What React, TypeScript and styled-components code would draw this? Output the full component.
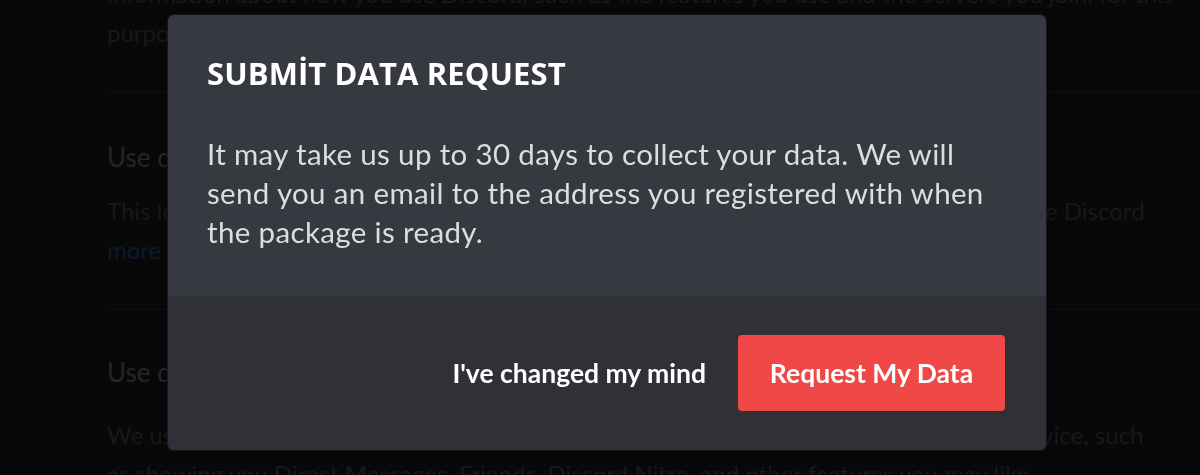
import React from 'react';
import styled, { createGlobalStyle } from 'styled-components';

const GlobalStyle = createGlobalStyle`
    html, body {
        margin: 0;
        padding: 0;
        background: #080809;
        overflow: hidden;
    }
    body {
        font-family: Lato, "Open Sans", sans-serif;
    }
`;

const Page = styled.div`
    width: 1200px;
    height: 475px;
    overflow: hidden;
    padding: 0 0 0 107px;
    box-sizing: border-box;
    background: #080809;
    font-family: Lato, sans-serif;
`;

const Paragraph = styled.p`
    margin: 0;
    font-size: 24px;
    line-height: 39px;
    color: #17181a;
    white-space: nowrap;
`;

const Heading = styled.h3`
    margin: 0;
    font-size: 26px;
    font-weight: 400;
    line-height: 32px;
    color: #242528;
    white-space: nowrap;
`;

const Divider = styled.hr`
    margin: 0;
    border: 0;
    border-top: 1px solid #0f1012;
    width: 1100px;
`;

const Section = styled.section<{ $top: number }>`
    padding-top: ${(p) => p.$top}px;
`;

const Link = styled.span`
    color: #0b1a2e;
`;

const Overlay = styled.div`
    position: fixed;
    inset: 0;
    display: flex;
    align-items: flex-start;
    padding: 15px 0 0 168px;
    box-sizing: border-box;
`;

const Modal = styled.div`
    width: 878px;
    height: 435px;
    border-radius: 6px;
    overflow: hidden;
    display: flex;
    flex-direction: column;
    background: #36393f;
    box-shadow: 0 0 0 1px rgba(32, 34, 37, 0.6), 0 2px 10px 0 rgba(0, 0, 0, 0.2);
`;

const Body = styled.div`
    padding: 40px 46px 0 39px;
    flex: 1;
`;

const Title = styled.h2`
    margin: 0 0 43px;
    font-family: "Open Sans", sans-serif;
    font-weight: 700;
    font-size: 31px;
    line-height: 36px;
    text-transform: uppercase;
    color: #ffffff;
    letter-spacing: 0.1px;
`;

const Message = styled.p`
    margin: 0;
    font-family: Lato, sans-serif;
    font-size: 29.5px;
    line-height: 39px;
    letter-spacing: 0.35px;
    color: #dcddde;
`;

const Footer = styled.div`
    height: 154px;
    flex-shrink: 0;
    box-sizing: border-box;
    background: #2f3136;
    display: flex;
    align-items: center;
    justify-content: flex-end;
    gap: 32px;
    padding: 0 41px;
`;

const LinkButton = styled.button`
    background: none;
    border: 0;
    padding: 0;
    cursor: pointer;
    font-family: Lato, sans-serif;
    font-weight: 700;
    font-size: 26.5px;
    color: #ffffff;
`;

const DangerButton = styled.button`
    width: 267px;
    height: 76px;
    border: 0;
    border-radius: 4px;
    background: #f04747;
    color: #ffffff;
    font-family: Lato, sans-serif;
    font-weight: 700;
    font-size: 26.5px;
    cursor: pointer;
`;

export default function App() {
    return (
        <>
            <GlobalStyle />
            <Page>
                <Paragraph style={{ marginTop: '-26px' }}>
                    information about how you use Discord, such as the features you use and the servers you join, for this
                </Paragraph>
                <Paragraph>
                    purpose, and we may also use it to make the app better for everyone in this test.
                </Paragraph>
                <Section $top={40}>
                    <Divider />
                </Section>
                <Section $top={48}>
                    <Heading>Use data to customize my Discord experience</Heading>
                </Section>
                <Section $top={18}>
                    <Paragraph>
                        This lets us use information such as who you talk to and what games you play to customize Discord
                    </Paragraph>
                    <Paragraph>
                        <Link>more</Link>
                    </Paragraph>
                </Section>
                <Section $top={40}>
                    <Divider />
                </Section>
                <Section $top={46}>
                    <Heading>Use data to improve Discord</Heading>
                </Section>
                <Section $top={27}>
                    <Paragraph>
                        We use data to understand how you use Discord so we can improve our products and service, such
                    </Paragraph>
                    <Paragraph>
                        as showing you Direct Messages, Friends, Discord Nitro, and other features you may like.
                    </Paragraph>
                </Section>
            </Page>
            <Overlay>
                <Modal>
                    <Body>
                        <Title>Submİt Data Request</Title>
                        <Message>
                            It may take us up to 30 days to collect your data. We will send you an email to the
                            address you registered with when the package is ready.
                        </Message>
                    </Body>
                    <Footer>
                        <LinkButton>I've changed my mind</LinkButton>
                        <DangerButton>Request My Data</DangerButton>
                    </Footer>
                </Modal>
            </Overlay>
        </>
    );
}
